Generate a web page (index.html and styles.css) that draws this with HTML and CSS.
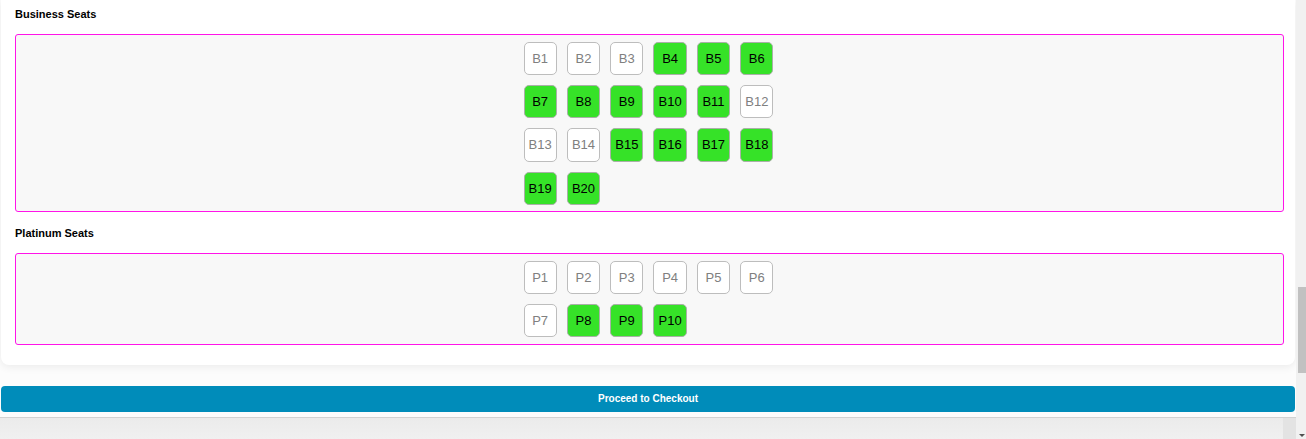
FILE: index.html
```html
<!DOCTYPE html>
<html>
<head>
<meta charset="utf-8">
<link rel="stylesheet" href="styles.css">
</head>
<body>
<div class="screen">
  <div class="page">
    <div class="card">
      <h4 class="section-title">Business Seats</h4>
      <div class="seat-box">
        <div class="seat-grid">
          <button class="seat">B1</button>
          <button class="seat">B2</button>
          <button class="seat">B3</button>
          <button class="seat taken">B4</button>
          <button class="seat taken">B5</button>
          <button class="seat taken">B6</button>
          <button class="seat taken">B7</button>
          <button class="seat taken">B8</button>
          <button class="seat taken">B9</button>
          <button class="seat taken">B10</button>
          <button class="seat taken">B11</button>
          <button class="seat">B12</button>
          <button class="seat">B13</button>
          <button class="seat">B14</button>
          <button class="seat taken">B15</button>
          <button class="seat taken">B16</button>
          <button class="seat taken">B17</button>
          <button class="seat taken">B18</button>
          <button class="seat taken">B19</button>
          <button class="seat taken">B20</button>
        </div>
      </div>
      <h4 class="section-title second">Platinum Seats</h4>
      <div class="seat-box">
        <div class="seat-grid">
          <button class="seat">P1</button>
          <button class="seat">P2</button>
          <button class="seat">P3</button>
          <button class="seat">P4</button>
          <button class="seat">P5</button>
          <button class="seat">P6</button>
          <button class="seat">P7</button>
          <button class="seat taken">P8</button>
          <button class="seat taken">P9</button>
          <button class="seat taken">P10</button>
        </div>
      </div>
    </div>
    <button class="checkout">Proceed to Checkout</button>
    <div class="footer"><div class="footer-main"></div><div class="footer-end"></div></div>
  </div>
  <div class="scrollbar">
    <div class="thumb"></div>
    <div class="spacer"></div>
    <div class="arrow"></div>
  </div>
</div>
</body>
</html>
```
FILE: styles.css
```css
html, body {
  margin: 0;
  padding: 0;
  height: 100%;
  overflow: hidden;
}
body {
  font-family: "Liberation Sans", Arial, sans-serif;
  background: #fcfcfc;
}
.screen {
  display: flex;
  height: 439px;
  width: 1306px;
}
.page {
  flex: 1;
  display: flex;
  flex-direction: column;
  min-width: 0;
}
.card {
  margin: 0 1px;
  background: #fff;
  border-radius: 0 0 8px 8px;
  box-shadow: 0 2px 8px rgba(0,0,0,0.07);
  padding: 8px 11px 20px 14px;
}
.section-title {
  margin: 0 0 13px;
  font-size: 11px;
  line-height: 13px;
  font-weight: bold;
  color: #000;
}
.section-title.second {
  margin-top: 15px;
}
.seat-box {
  border: 1px solid #ff14e8;
  border-radius: 3px;
  background: #f8f8f8;
  padding: 1.6px 2px 1.2px 0;
}
.seat-grid {
  width: 260px;
  margin: 0 auto;
  display: flex;
  flex-wrap: wrap;
}
.seat {
  box-sizing: border-box;
  width: 33.33px;
  height: 33.33px;
  margin: 5px;
  padding: 0;
  border: 1px solid #bdbdbd;
  border-radius: 5px;
  background: #fff;
  color: #808080;
  font-family: "Liberation Sans", Arial, sans-serif;
  font-size: 13px;
}
.seat.taken {
  background: #36e228;
  color: #000;
  border-color: #aab0a8;
}
.checkout {
  margin: 21px 1px 0;
  height: 26px;
  border: none;
  border-radius: 4px;
  background: #008cba;
  color: #fff;
  font-family: "Liberation Sans", Arial, sans-serif;
  font-size: 10px;
  font-weight: bold;
}
.footer {
  margin-top: 5px;
  flex: 1;
  display: flex;
  border-top: 1px solid #d2d2d2;
  background: linear-gradient(#ebebeb, #f0f0f0);
}
.footer-main {
  flex: 1;
}
.footer-end {
  width: 13px;
  background: #e3e3e3;
}
.scrollbar {
  width: 10px;
  background: #f1f1f1;
  display: flex;
  flex-direction: column;
}
.thumb {
  margin-top: 287px;
  margin-left: 2px;
  width: 8px;
  height: 86px;
  background: #c1c1c1;
}
.spacer {
  flex: 1;
}
.arrow {
  width: 0;
  height: 0;
  margin: 0 0 2px 3px;
  border-left: 3px solid transparent;
  border-right: 3px solid transparent;
  border-top: 3px solid #505050;
}
```
